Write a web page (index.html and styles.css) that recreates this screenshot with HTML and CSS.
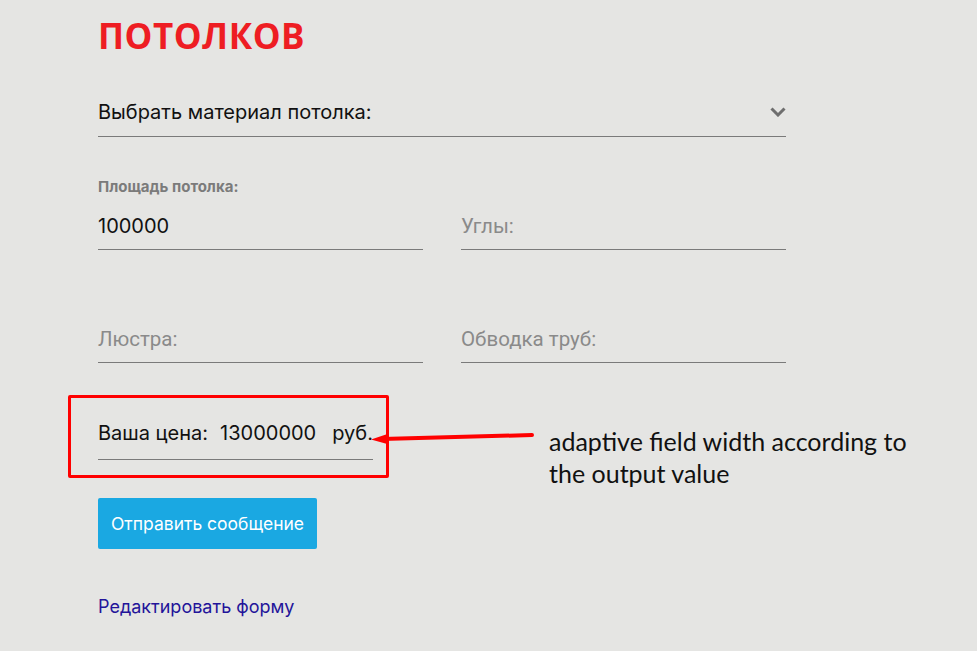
FILE: index.html
```html
<!DOCTYPE html>
<html lang="ru">
<head>
<meta charset="utf-8">
<link rel="stylesheet" href="styles.css">
</head>
<body>
<div class="page">
  <h1 class="title">ПОТОЛКОВ</h1>
  <form class="calc">
    <div class="select">
      <span class="select-text">Выбрать материал потолка:</span>
      <svg class="chevron" width="16" height="10" viewBox="0 0 16 10"><path d="M1.5 1.5 L8 8 L14.5 1.5" fill="none" stroke="#6e6e6e" stroke-width="3"/></svg>
    </div>
    <div class="grid">
      <div class="field">
        <div class="label">Площадь потолка:</div>
        <div class="input value">100000</div>
      </div>
      <div class="field">
        <div class="input placeholder">Углы:</div>
      </div>
      <div class="field">
        <div class="input placeholder">Люстра:</div>
      </div>
      <div class="field">
        <div class="input placeholder">Обводка труб:</div>
      </div>
    </div>
    <div class="price-row">
      <div class="price-box">
        <div class="price">
          <span>Ваша цена:</span>
          <span>13000000</span>
          <span>руб.</span>
        </div>
      </div>
      <div class="note">adaptive field width according to the output value</div>
      <svg class="arrow" width="170" height="16" viewBox="0 0 170 16"><path d="M12 10 L162 6" stroke="#ff0000" stroke-width="4" stroke-linecap="round"/><path d="M1 10.5 L19 4.5 L19 15.5 Z" fill="#ff0000"/></svg>
    </div>
    <button type="button" class="btn">Отправить сообщение</button>
    <a class="edit" href="#">Редактировать форму</a>
  </form>
</div>
</body>
</html>
```
FILE: styles.css
```css
html, body {
  margin: 0;
  padding: 0;
  background: #e5e5e3;
}
body {
  font-family: Inter, "Noto Sans", sans-serif;
  color: #111;
}
.page {
  padding: 14px 0 0 98px;
  width: 688px;
}
.title {
  margin: 0;
  font-family: "Open Sans", "DejaVu Sans", sans-serif;
  font-weight: 700;
  font-size: 35px;
  line-height: 44px;
  color: #ee1d23;
  letter-spacing: 0.5px;
}
.calc {
  display: flex;
  flex-direction: column;
  align-items: flex-start;
}
.select {
  margin-top: 29px;
  width: 688px;
  height: 50px;
  border-bottom: 1.5px solid #7a7a7a;
  display: flex;
  justify-content: space-between;
  align-items: center;
  box-sizing: border-box;
}
.select-text {
  font-size: 20px;
  color: #111;
}
.grid {
  margin-top: 40px;
  width: 688px;
  display: grid;
  grid-template-columns: 325px 325px;
  column-gap: 38px;
  row-gap: 65px;
  align-items: end;
}
.label {
  font-weight: 700;
  font-size: 15px;
  color: #7b7b7b;
  line-height: 20px;
  margin-bottom: 5px;
}
.input {
  height: 48px;
  box-sizing: border-box;
  border-bottom: 1.5px solid #7a7a7a;
  display: flex;
  align-items: center;
  font-size: 20px;
}
.value {
  color: #111;
}
.placeholder {
  font-family: Roboto, sans-serif;
  color: #8a8a8a;
  font-size: 20.5px;
}
.price-row {
  position: relative;
  margin-top: 32px;
  margin-left: -30px;
}
.price-box {
  border: 3.5px solid #ff0000;
  border-radius: 2px;
  padding: 12px 14px 15px 27px;
  width: 321px;
  box-sizing: border-box;
}
.price {
  display: flex;
  gap: 12px;
  height: 50px;
  padding-bottom: 3px;
  box-sizing: border-box;
  align-items: center;
  border-bottom: 1.5px solid #7a7a7a;
  font-size: 20px;
  width: 275px;
}
.price span:nth-child(3) {
  margin-left: 4px;
}
.note {
  position: absolute;
  left: 481px;
  top: 30px;
  width: 375px;
  font-family: Lato, "Open Sans", sans-serif;
  font-size: 25px;
  line-height: 32px;
  color: #111;
}
.arrow {
  position: absolute;
  left: 302px;
  top: 34px;
}
.btn {
  margin-top: 20px;
  height: 51px;
  width: 219px;
  border: none;
  border-radius: 2px;
  background: #1aa8e2;
  color: #fff;
  font-family: Inter, sans-serif;
  font-size: 17.5px;
  padding: 0;
  cursor: pointer;
}
.edit {
  margin-top: 47px;
  font-size: 18px;
  color: #23149a;
  text-decoration: none;
}
```
